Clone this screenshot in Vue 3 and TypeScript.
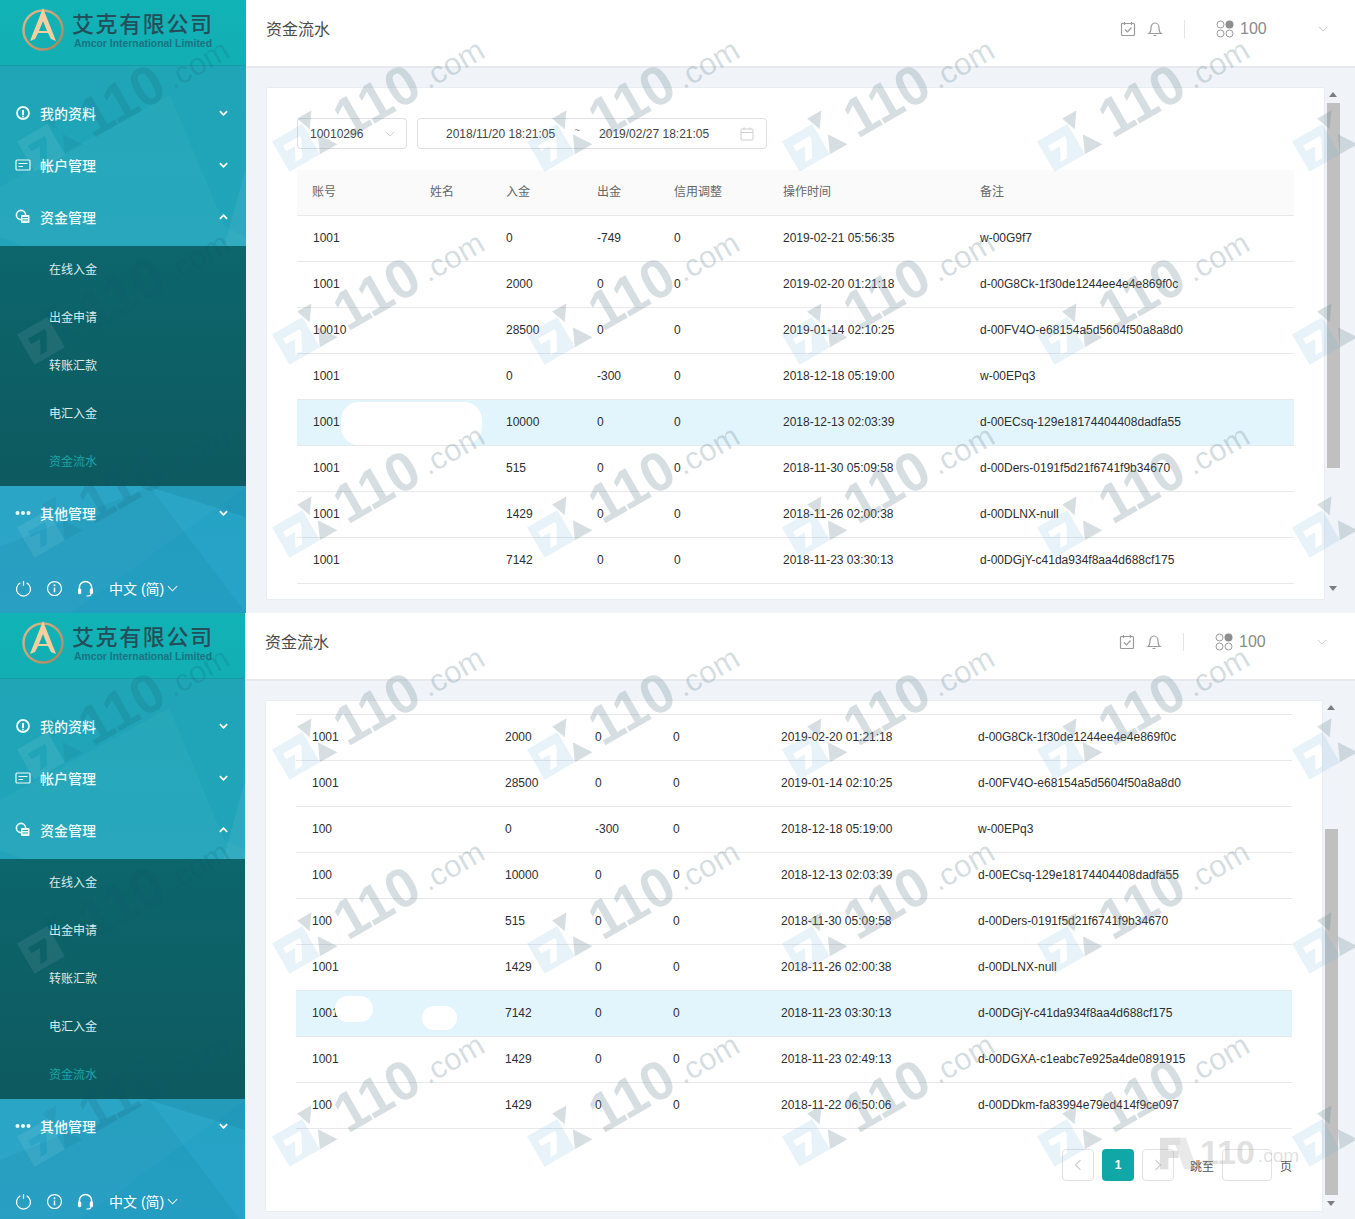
<script setup lang="ts">
interface Row { inn: number; out: number; credit: number; time: string; note: string }
interface Blob { left: number; top: number; width: number; height: number }
interface Panel {
  cls: string
  rows: Row[]
  accts: string[]
  user: string
  active: number
  head: boolean
  pager: boolean
  thumbTop: number
  thumbH: number
  blobs: Blob[][]
}

const all: Row[] = [
  { inn: 0, out: -749, credit: 0, time: '2019-02-21 05:56:35', note: 'w-00G9f7' },
  { inn: 2000, out: 0, credit: 0, time: '2019-02-20 01:21:18', note: 'd-00G8Ck-1f30de1244ee4e4e869f0c' },
  { inn: 28500, out: 0, credit: 0, time: '2019-01-14 02:10:25', note: 'd-00FV4O-e68154a5d5604f50a8a8d0' },
  { inn: 0, out: -300, credit: 0, time: '2018-12-18 05:19:00', note: 'w-00EPq3' },
  { inn: 10000, out: 0, credit: 0, time: '2018-12-13 02:03:39', note: 'd-00ECsq-129e18174404408dadfa55' },
  { inn: 515, out: 0, credit: 0, time: '2018-11-30 05:09:58', note: 'd-00Ders-0191f5d21f6741f9b34670' },
  { inn: 1429, out: 0, credit: 0, time: '2018-11-26 02:00:38', note: 'd-00DLNX-null' },
  { inn: 7142, out: 0, credit: 0, time: '2018-11-23 03:30:13', note: 'd-00DGjY-c41da934f8aa4d688cf175' },
  { inn: 1429, out: 0, credit: 0, time: '2018-11-23 02:49:13', note: 'd-00DGXA-c1eabc7e925a4de0891915' },
  { inn: 1429, out: 0, credit: 0, time: '2018-11-22 06:50:06', note: 'd-00DDkm-fa83994e79ed414f9ce097' }
]

const panels: Panel[] = [
  {
    cls: 'shot-a',
    rows: all.slice(0, 8),
    accts: ['1001', '1001', '10010', '1001', '1001', '1001', '1001', '1001'],
    user: '100',
    active: 4,
    head: true,
    pager: false,
    thumbTop: 0,
    thumbH: 365,
    blobs: [[], [], [], [], [{ left: 44, top: 2, width: 141, height: 43 }], [], [], []]
  },
  {
    cls: 'shot-b',
    rows: all.slice(1),
    accts: ['1001', '1001', '100', '100', '100', '1001', '1001', '1001', '100'],
    user: '100',
    active: 6,
    head: false,
    pager: true,
    thumbTop: 113,
    thumbH: 366,
    blobs: [[], [], [], [], [], [], [
      { left: 39, top: 5, width: 38, height: 26 },
      { left: 126, top: 15, width: 35, height: 24 }
    ], [], []]
  }
]

const heads = ['账号', '姓名', '入金', '出金', '信用调整', '操作时间', '备注']
const subItems = ['在线入金', '出金申请', '转账汇款', '电汇入金', '资金流水']

const marks: { left: number; top: number }[] = []
for (const top of [156, 349, 542, 764, 958, 1151]) {
  for (const left of [25, 280, 535, 790, 1045, 1300]) {
    marks.push({ left, top })
  }
}
</script>

<template>
  <div class="page">
    <section v-for="p in panels" :key="p.cls" class="shot" :class="p.cls">
      <aside class="side">
        <svg class="side-bg" viewBox="0 0 246 546" preserveAspectRatio="none" aria-hidden="true">
          <polygon points="170,28 225,160 246,170 246,260 150,230 0,170 0,120 60,88" fill="#ffffff" opacity="0.035" />
          <polygon points="246,100 224,180 246,186" fill="#ffffff" opacity="0.06" />
          <polygon points="0,300 155,225 246,190 246,420 70,546 0,546" fill="#ffffff" opacity="0.03" />
          <polygon points="150,420 246,450 246,400 150,410" fill="#0b6f8c" opacity="0.18" />
          <polygon points="0,480 150,420 246,546 0,546" fill="#0b6f8c" opacity="0.1" />
        </svg>
        <div class="brand">
          <svg class="brand-mark" viewBox="0 0 46 50" aria-hidden="true">
            <defs>
              <linearGradient :id="p.cls + '-ring'" x1="0" y1="0" x2="1" y2="1">
                <stop offset="0" stop-color="#e2bb8c" />
                <stop offset="1" stop-color="#a98259" />
              </linearGradient>
            </defs>
            <circle cx="22" cy="24" r="19.5" fill="none" :stroke="`url(#${p.cls}-ring)`" stroke-width="2.4" />
            <path d="M22 2 L35 35 L30 33 L27 27 H17 L14 33 L9 35 Z" fill="#f6cf9f" />
            <path d="M22 15 L26 25 H18 Z" fill="#12aeb3" />
          </svg>
          <div class="brand-text">
            <div class="brand-name">艾克有限公司</div>
            <div class="brand-en">Amcor International Limited</div>
          </div>
        </div>
        <nav class="menu">
          <div class="menu-item">
            <svg class="mi" viewBox="0 0 16 16" aria-hidden="true">
              <circle cx="8" cy="8" r="6" fill="none" stroke="currentColor" stroke-width="1.8" />
              <path d="M8 5 V10" stroke="currentColor" stroke-width="2" />
              <circle cx="8" cy="11.4" r="1" fill="currentColor" />
            </svg>
            <span>我的资料</span>
            <svg class="chev" viewBox="0 0 10 6" aria-hidden="true"><path d="M1 1 L5 5 L9 1" /></svg>
          </div>
          <div class="menu-item">
            <svg class="mi" viewBox="0 0 16 16" aria-hidden="true">
              <rect x="1" y="3" width="14" height="10" rx="1" fill="none" stroke="currentColor" stroke-width="1.2" />
              <path d="M3.5 6.5 H12.5 M3.5 9.5 H8" stroke="currentColor" stroke-width="1.2" />
            </svg>
            <span>帐户管理</span>
            <svg class="chev" viewBox="0 0 10 6" aria-hidden="true"><path d="M1 1 L5 5 L9 1" /></svg>
          </div>
          <div class="menu-item">
            <svg class="mi" viewBox="0 0 16 16" aria-hidden="true">
              <circle cx="6" cy="6" r="4.6" fill="none" stroke="currentColor" stroke-width="1.6" />
              <rect x="6" y="6" width="8.5" height="8" rx="1" fill="currentColor" />
              <path d="M7.5 8.5 H13 M7.5 11 H13" stroke="#20a5b5" stroke-width="1" />
            </svg>
            <span>资金管理</span>
            <svg class="chev" viewBox="0 0 10 6" aria-hidden="true"><path d="M1 5 L5 1 L9 5" /></svg>
          </div>
          <div class="sub">
            <div v-for="(s, i) in subItems" :key="s" class="sub-item" :class="{ on: i === 4 }">{{ s }}</div>
          </div>
          <div class="menu-item">
            <svg class="mi" viewBox="0 0 16 16" aria-hidden="true">
              <circle cx="2.5" cy="8" r="2" fill="currentColor" />
              <circle cx="8" cy="8" r="2" fill="currentColor" />
              <circle cx="13.5" cy="8" r="2" fill="currentColor" />
            </svg>
            <span>其他管理</span>
            <svg class="chev" viewBox="0 0 10 6" aria-hidden="true"><path d="M1 1 L5 5 L9 1" /></svg>
          </div>
        </nav>
        <div class="side-foot">
          <svg class="fi" viewBox="0 0 18 18" aria-hidden="true">
            <path d="M5.6 3 A7.4 7.4 0 1 0 12.4 3 M9 1 V6" fill="none" stroke="currentColor" stroke-width="1.3" />
          </svg>
          <svg class="fi" viewBox="0 0 18 18" aria-hidden="true">
            <circle cx="9" cy="9" r="7.4" fill="none" stroke="currentColor" stroke-width="1.3" />
            <path d="M9 8 V13" stroke="currentColor" stroke-width="1.6" />
            <circle cx="9" cy="5.6" r="1" fill="currentColor" />
          </svg>
          <svg class="fi" viewBox="0 0 18 18" aria-hidden="true">
            <path d="M2.5 10 V8 A6.5 6.5 0 0 1 15.5 8 V10" fill="none" stroke="currentColor" stroke-width="1.6" />
            <rect x="1" y="9" width="3.5" height="6" rx="1.5" fill="currentColor" />
            <rect x="13.5" y="9" width="3.5" height="6" rx="1.5" fill="currentColor" />
            <path d="M15 15 Q14 17 10 17" fill="none" stroke="currentColor" stroke-width="1.2" />
          </svg>
          <span class="lang">中文 (简)</span>
          <svg class="lang-chev" viewBox="0 0 12 7" aria-hidden="true"><path d="M1 1 L6 6 L11 1" /></svg>
        </div>
      </aside>

      <main class="main">
        <header class="top">
          <div class="title">资金流水</div>
          <div class="tools">
            <svg class="ti" viewBox="0 0 16 16" aria-hidden="true">
              <rect x="1.5" y="2.5" width="13" height="12" rx="1" />
              <path d="M4.5 1 V4 M11.5 1 V4 M5 8.5 L7.5 11 L11.5 6.5" />
            </svg>
            <svg class="ti bell" viewBox="0 0 16 16" aria-hidden="true">
              <path d="M2 12.5 Q4 11 4 6.5 A4 4.5 0 0 1 12 6.5 Q12 11 14 12.5 Z M6.5 14.5 H9.5" />
            </svg>
            <div class="sep"></div>
            <svg class="dots" viewBox="0 0 18 18" aria-hidden="true">
              <circle cx="4.5" cy="4.5" r="3.5" />
              <circle cx="13.5" cy="4.5" r="4" class="solid" />
              <circle cx="4.5" cy="13.5" r="3.5" />
              <circle cx="13.5" cy="13.5" r="3.5" />
            </svg>
            <div class="acct">{{ p.user }}</div>
            <svg class="top-chev" viewBox="0 0 12 7" aria-hidden="true"><path d="M1 1 L6 6 L11 1" /></svg>
          </div>
        </header>

        <div class="body">
          <div class="card">
            <template v-if="p.head">
              <div class="filters">
                <div class="select">
                  <span>10010296</span>
                  <svg class="sel-chev" viewBox="0 0 12 7" aria-hidden="true"><path d="M1 1 L6 6 L11 1" /></svg>
                </div>
                <div class="range">
                  <span class="d1">2018/11/20 18:21:05</span>
                  <span class="tilde">~</span>
                  <span class="d2">2019/02/27 18:21:05</span>
                  <svg class="cal" viewBox="0 0 14 14" aria-hidden="true">
                    <rect x="1" y="2" width="12" height="11" rx="1" />
                    <path d="M1 5.5 H13 M4 0.5 V3 M10 0.5 V3" />
                  </svg>
                </div>
              </div>
              <div class="grid thead">
                <div v-for="h in heads" :key="h" class="cell">{{ h }}</div>
              </div>
            </template>
            <div class="tbody" :class="{ lined: !p.head }">
              <div
                v-for="(r, i) in p.rows"
                :key="r.time"
                class="grid trow"
                :class="{ active: i === p.active }"
              >
                <div class="cell">{{ p.accts[i] }}</div>
                <div class="cell"></div>
                <div class="cell">{{ r.inn }}</div>
                <div class="cell">{{ r.out }}</div>
                <div class="cell">{{ r.credit }}</div>
                <div class="cell">{{ r.time }}</div>
                <div class="cell">{{ r.note }}</div>
                <i
                  v-for="(b, k) in p.blobs[i]"
                  :key="k"
                  class="blob"
                  :style="{ left: b.left + 'px', top: b.top + 'px', width: b.width + 'px', height: b.height + 'px' }"
                ></i>
              </div>
            </div>
            <div v-if="p.pager" class="pager">
              <div class="pg">
                <svg viewBox="0 0 8 12" aria-hidden="true"><path d="M6.5 1 L1.5 6 L6.5 11" /></svg>
              </div>
              <div class="pg cur">1</div>
              <div class="pg">
                <svg viewBox="0 0 8 12" aria-hidden="true"><path d="M1.5 1 L6.5 6 L1.5 11" /></svg>
              </div>
              <span class="jump">跳至</span>
              <div class="pg-input"></div>
              <span class="jump-end">页</span>
            </div>
          </div>
          <div class="bar">
            <div class="arrow up"></div>
            <div class="thumb" :style="{ marginTop: p.thumbTop + 'px', height: p.thumbH + 'px' }"></div>
            <div class="arrow down"></div>
          </div>
        </div>
      </main>
    </section>

    <div class="marks" aria-hidden="true">
      <div
        v-for="(m, i) in marks"
        :key="i"
        class="mark"
        :class="{ dim: m.left < 200 }"
        :style="{ left: m.left + 'px', top: m.top + 'px' }"
      >
        <svg class="mark-logo" viewBox="0 0 60 52">
          <path
            class="mark-blue"
            fill-rule="evenodd"
            d="M0 8 H38 V46 H0 Z M8 18 V25 H19 L11 40 H19 L29 22 V18 Z"
          />
          <polygon class="mark-gray" points="36,0 54,0 42,17" />
          <polygon class="mark-gray" points="47,26 60,46 38,46" />
        </svg>
        <template v-if="m.left < 1300">
          <span class="mark-num">110</span>
          <span class="mark-dom">.com</span>
        </template>
      </div>
      <div class="stamp">
        <svg class="stamp-logo" viewBox="0 0 40 40">
          <polygon points="0,4 22,4 22,12 9,12 9,18 20,18 20,26 9,26 9,38 0,38" fill="#9a9a9a" />
          <polygon points="14,4 28,4 40,38 26,38" fill="#9a9a9a" fill-opacity="0.7" />
        </svg>
        <span class="stamp-num">110</span>
        <span class="stamp-dom">.com</span>
      </div>
    </div>
  </div>
</template>

<style>
html, body { margin: 0; padding: 0; background: #f0f4f9; }
</style>

<style scoped>
.page {
  position: relative;
  width: 1355px;
  height: 1219px;
  overflow: hidden;
  font-family: "Liberation Sans", "Noto Sans CJK SC", sans-serif;
  font-size: 12px;
  color: #2e2e2e;
  background: #f0f4f9;
}

.shot { display: flex; overflow: hidden; }
.shot-a { height: 613px; }
.shot-b { height: 606px; }

/* sidebar */
.side {
  position: relative;
  flex: none;
  width: 246px;
  height: 613px;
  overflow: hidden;
  color: #fff;
  background: linear-gradient(180deg, #1ea6b4 0%, #22a3be 55%, #27a3c9 100%);
}
.shot-b .side { width: 245px; }
.side-bg { position: absolute; left: 0; top: 67px; width: 100%; height: 546px; }
.brand {
  position: relative;
  display: flex;
  align-items: flex-start;
  height: 66px;
  padding: 0 0 0 21px;
  box-sizing: border-box;
  background: linear-gradient(180deg, #11b3b6, #12aeb3);
  border-bottom: 1px solid #1a9aa6;
}
.brand-mark { width: 46px; height: 50px; margin-top: 6px; flex: none; }
.brand-text { margin-left: 5px; padding-top: 8px; }
.brand-name {
  font-size: 22px;
  line-height: 28px;
  letter-spacing: 1.6px;
  font-weight: 500;
  color: #234f5a;
  font-family: "Noto Sans CJK SC", sans-serif;
}
.brand-en {
  margin: 1px 0 0 2px;
  font-size: 10.4px;
  line-height: 14px;
  font-weight: 700;
  color: #1b7382;
}
.menu { position: relative; padding-top: 21px; }
.menu-item {
  display: flex;
  align-items: center;
  height: 52px;
  padding-left: 15px;
  font-size: 14px;
  font-weight: 500;
  color: #eefafa;
}
.mi { width: 16px; height: 16px; margin-right: 9px; flex: none; }
.chev {
  width: 9px;
  height: 6px;
  margin-left: 123px;
  fill: none;
  stroke: #fff;
  stroke-width: 2;
}
.sub {
  margin: 3px 0 1px;
  background: linear-gradient(180deg, #0c666c, #0d5a60);
}
.sub-item {
  height: 48px;
  line-height: 48px;
  padding-left: 49px;
  font-size: 12px;
  color: #dcebea;
}
.sub-item.on { color: #1aa5a6; }
.side-foot {
  position: relative;
  display: flex;
  align-items: center;
  height: 24px;
  margin-top: 37px;
  padding-left: 15px;
}
.fi { width: 17px; height: 17px; margin-right: 14px; flex: none; }
.lang { font-size: 14px; margin-left: 1px; white-space: nowrap; }
.lang-chev { width: 11px; height: 7px; margin-left: 3px; fill: none; stroke: #eef; stroke-width: 1.2; }

/* main */
.main { flex: 1; min-width: 0; display: flex; flex-direction: column; }
.top {
  display: flex;
  align-items: center;
  flex: none;
  padding: 0 27px 8px 20px;
  height: 58px;
  background: #fff;
  border-bottom: 2px solid #e6eaee;
}
.shot-b .top { padding-right: 28px; }
.title { font-size: 16px; color: #4a4a4a; margin-bottom: 2px; }
.tools { margin-left: auto; display: flex; align-items: center; }
.ti { width: 16px; height: 16px; fill: none; stroke: #9a9a9a; stroke-width: 1.2; }
.bell { margin-left: 11px; }
.sep { width: 1px; height: 18px; margin: 0 31px 0 21px; background: #e4e4e4; }
.dots { width: 18px; height: 18px; fill: none; stroke: #999; stroke-width: 1; }
.dots .solid { fill: #8f8f8f; stroke: none; }
.acct {
  width: 30px;
  margin: 0 48px 0 6px;
  white-space: nowrap;
  font-size: 16px;
  color: #8a8a8a;
}
.shot-b .acct { width: 27px; margin-right: 51px; }
.top-chev { width: 10px; height: 6px; fill: none; stroke: #c4c4c4; stroke-width: 1; }

.body { flex: 1; min-height: 0; display: flex; padding: 19px 15px 13px 20px; }
.shot-b .body { padding: 19px 17px 7px 20px; }
.card {
  flex: 1;
  min-width: 0;
  overflow: hidden;
  padding: 30px 30px 0;
  background: #fff;
  border: 1px solid #e8edf1;
  border-radius: 2px;
}
.shot-b .card { padding-top: 13px; }
.filters { display: flex; height: 31px; margin-bottom: 21px; }
.select {
  display: flex;
  align-items: center;
  width: 110px;
  padding-left: 12px;
  box-sizing: border-box;
  border: 1px solid #dcdfe3;
  border-radius: 4px;
  color: #444;
}
.sel-chev { width: 10px; height: 6px; margin-left: 22px; fill: none; stroke: #c8c8c8; }
.range {
  display: flex;
  align-items: center;
  width: 350px;
  margin-left: 10px;
  box-sizing: border-box;
  border: 1px solid #dcdfe3;
  border-radius: 4px;
  color: #444;
  white-space: nowrap;
}
.d1 { margin-left: 28px; }
.tilde { margin: -6px 0 0 19px; color: #888; font-size: 10px; }
.d2 { margin-left: 19px; }
.cal { width: 14px; height: 14px; margin-left: 31px; fill: none; stroke: #cfcfcf; }

.grid {
  position: relative;
  display: grid;
  grid-template-columns: 117px 76px 91px 77px 109px 197px 1fr;
  align-items: center;
  height: 46px;
  box-sizing: border-box;
  border-bottom: 1px solid #e6e8eb;
}
.shot-b .grid { grid-template-columns: 117px 76px 90px 78px 108px 197px 1fr; }
.thead { background: #fafafa; color: #666; padding-bottom: 4px; }
.trow { padding-bottom: 2px; }
.cell { padding-left: 16px; white-space: nowrap; }
.thead .cell:first-child { padding-left: 15px; }
.tbody.lined { border-top: 1px solid #e6e8eb; }
.trow.active { background: #e3f5fc; }
.blob {
  position: absolute;
  background: #fff;
  border-radius: 18px;
}

.pager {
  display: flex;
  align-items: center;
  justify-content: flex-end;
  height: 32px;
  margin-top: 20px;
}
.pg {
  display: flex;
  align-items: center;
  justify-content: center;
  width: 32px;
  height: 32px;
  margin-right: 8px;
  box-sizing: border-box;
  border: 1px solid #e2e2e2;
  border-radius: 4px;
}
.pg svg { width: 8px; height: 12px; fill: none; stroke: #d0d0d0; stroke-width: 1.2; }
.pg.cur {
  border: none;
  background: #12a7a7;
  color: #fff;
  font-weight: 700;
}
.jump { margin-left: 8px; color: #555; }
.pg-input {
  width: 50px;
  height: 32px;
  margin: 0 8px;
  box-sizing: border-box;
  border: 1px solid #e2e2e2;
  border-radius: 4px;
}
.jump-end { color: #555; }

.bar {
  flex: none;
  display: flex;
  flex-direction: column;
  align-items: stretch;
  width: 13px;
  margin-left: 2px;
}
.thumb { flex: none; background: #c0c0c0; }
.arrow { flex: none; height: 16px; position: relative; }
.arrow.down { margin-top: auto; height: 20px; }
.arrow::after {
  content: "";
  position: absolute;
  left: 2px;
  border-left: 4px solid transparent;
  border-right: 4px solid transparent;
}
.arrow.up::after { top: 5px; border-bottom: 5px solid #7d7d7d; }
.arrow.down::after { top: 6px; border-top: 5px solid #7d7d7d; }

/* watermark layer */
.marks { position: absolute; inset: 0; pointer-events: none; overflow: hidden; }
.mark {
  position: absolute;
  display: flex;
  align-items: center;
  height: 60px;
  margin-top: -30px;
  transform: rotate(-30deg);
  transform-origin: 0 50%;
  white-space: nowrap;
  color: rgba(110, 135, 150, 0.28);
  font-weight: 700;
}
.mark-blue { fill: rgba(110, 175, 215, 0.16); }
.mark-gray { fill: rgba(110, 135, 150, 0.28); }
.mark.dim { color: rgba(20, 85, 105, 0.16); }
.mark.dim .mark-blue { fill: rgba(255, 255, 255, 0.08); }
.mark.dim .mark-gray { fill: rgba(20, 85, 105, 0.1); }
.mark-logo { width: 56px; height: 48px; flex: none; }
.mark-num { margin-left: 11px; font-size: 55px; line-height: 60px; }
.mark-dom { margin: 14px 0 0 6px; font-size: 31px; line-height: 36px; font-weight: 400; }
.stamp {
  position: absolute;
  left: 1160px;
  top: 1130px;
  display: flex;
  align-items: center;
  color: rgba(150, 150, 150, 0.3);
  font-weight: 700;
}
.stamp-logo { width: 37px; height: 37px; opacity: 0.3; }
.stamp-num { margin-left: 3px; font-size: 34px; line-height: 44px; }
.stamp-dom { margin: 8px 0 0 3px; font-size: 19px; font-weight: 400; }
</style>
